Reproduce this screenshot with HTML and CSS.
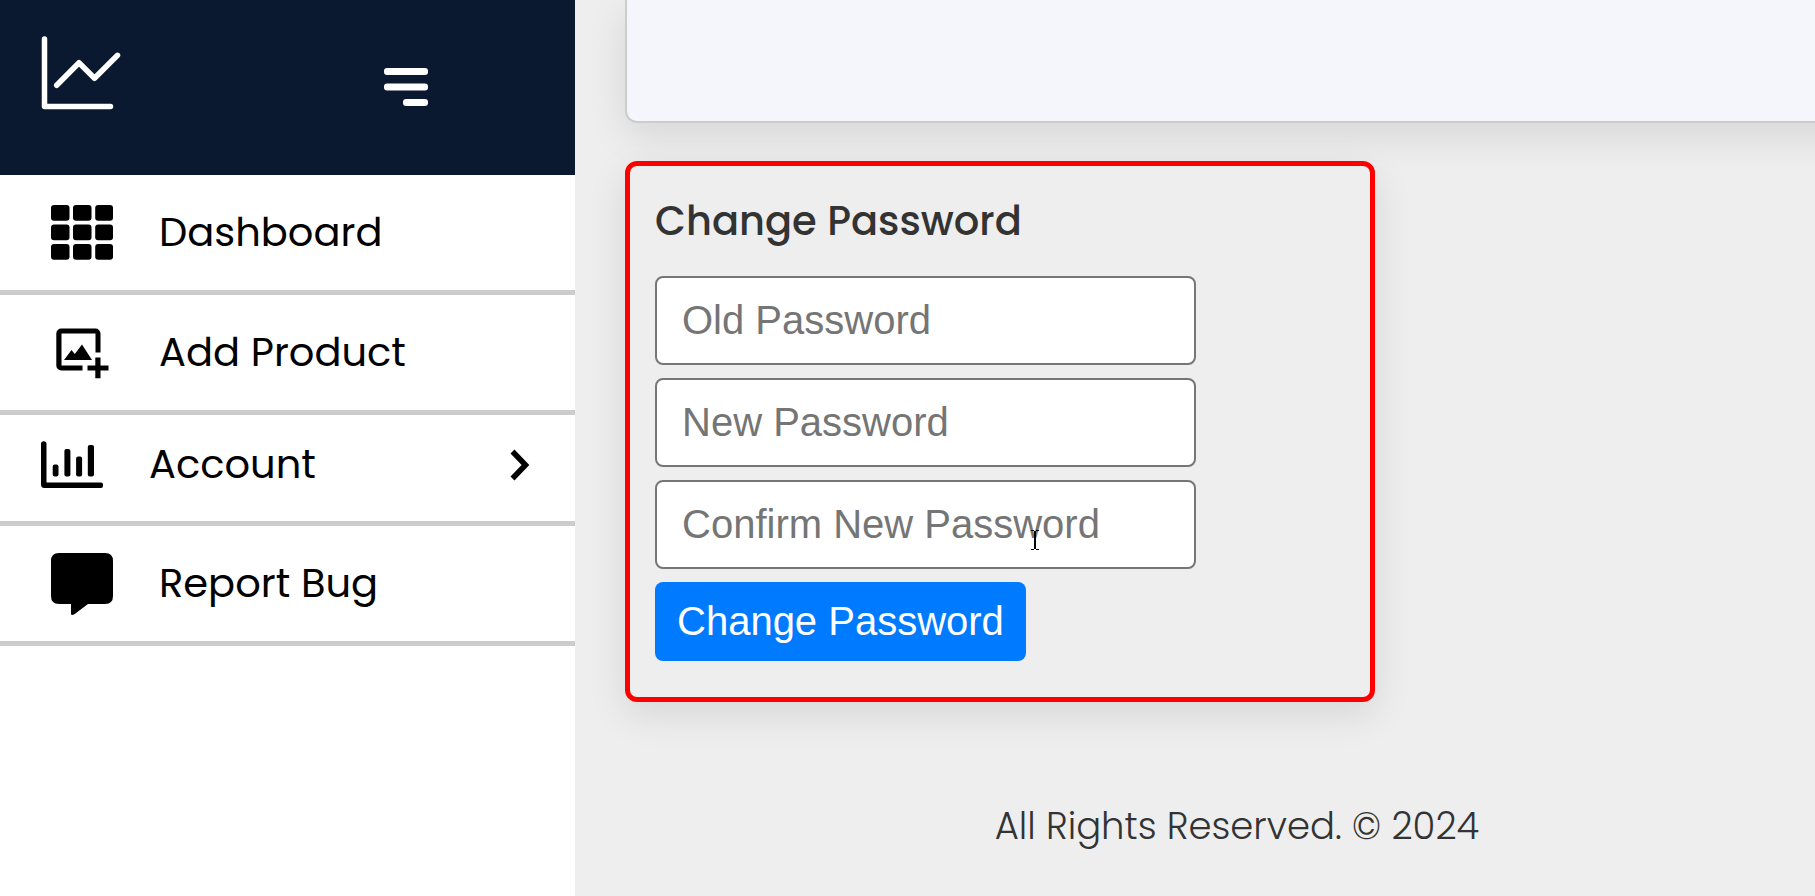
FILE: index.html
```html
<!DOCTYPE html>
<html lang="en">
<head>
<meta charset="utf-8">
<meta name="viewport" content="width=device-width, initial-scale=1">
<title>Change Password</title>
<link rel="stylesheet" href="styles.css">
</head>
<body>
<div class="layout">
  <aside class="sidebar">
    <header class="sidebar-header">
      <svg class="logo" viewBox="0 0 80 74" aria-hidden="true"><path d="M3.500 3V70.500H69.500M15.700 49.300L38 26.700L53.500 42.300L76.500 19.300"/></svg>
      <button class="menu-toggle" type="button" aria-label="Toggle menu">
        <svg class="menu-icon" viewBox="0 0 44 38" aria-hidden="true"><rect width="44" height="7" rx="3"/><rect y="15.500" width="44" height="7" rx="3"/><rect x="19" y="31" width="25" height="7" rx="3"/></svg>
      </button>
    </header>
    <nav>
      <ul class="menu">
        <li class="menu-item">
          <a class="menu-link" href="#">
            <svg class="icon" viewBox="0 -1 62 62" aria-hidden="true"><rect y="3" width="18.500" height="15.700" rx="3"/><rect x="22" y="3" width="18.500" height="15.700" rx="3"/><rect x="44.200" y="3" width="17.800" height="15.700" rx="3"/><rect y="22.500" width="18.500" height="15.700" rx="3"/><rect x="22" y="22.500" width="18.500" height="15.700" rx="3"/><rect x="44.200" y="22.500" width="17.800" height="15.700" rx="3"/><rect y="42" width="18.500" height="15.700" rx="3"/><rect x="22" y="42" width="18.500" height="15.700" rx="3"/><rect x="44.200" y="42" width="17.800" height="15.700" rx="3"/></svg>
            <span>Dashboard</span>
          </a>
        </li>
        <li class="menu-item">
          <a class="menu-link" href="#">
            <svg class="icon" viewBox="0 -1 62 62" aria-hidden="true"><path d="M10.300 6.500H44.300A5 5 0 0 1 49.500 11.500V30.500H44.500V11.500H10.500V43.500H31.500V48.500H10.300A5 5 0 0 1 5.300 43.500V11.500A5 5 0 0 1 10.300 6.500Z"/><path d="M13 38L20.500 28L23.800 32L31 22.500L41 38Z"/><path d="M44.300 35.500H49.500V43.500H57.500V48.500H49.500V56.300H44.300V48.500H36.500V43.500H44.300Z"/></svg>
            <span>Add Product</span>
          </a>
        </li>
        <li class="menu-item">
          <button class="menu-link menu-parent" type="button">
            <svg class="icon" viewBox="0 -1 62 62" aria-hidden="true"><path d="M0 10A2.750 2.750 0 0 1 5.500 10V48.500H60A2 2 0 0 1 62 50.500V52Q62 54 60 54H3.500Q0 54 0 50.500Z"/><rect x="11.700" y="30.500" width="5.800" height="12" rx="2"/><rect x="23.400" y="15" width="6" height="27.500" rx="2"/><rect x="35.100" y="22.500" width="6" height="20" rx="2"/><rect x="46.800" y="11" width="6.200" height="31.500" rx="2"/></svg>
            <span>Account</span>
            <svg class="chevron" viewBox="0 -1 20 32" aria-hidden="true"><path d="M2.500 2.500L15.500 16L2.500 29.500"/></svg>
          </button>
        </li>
        <li class="menu-item">
          <a class="menu-link" href="#">
            <svg class="icon" viewBox="0 -1 62 62" aria-hidden="true"><path d="M8 0H54Q62 0 62 8V43Q62 51 54 51H37L23 61.500Q20 62.500 20 61V51H8Q0 51 0 43V8Q0 0 8 0Z"/></svg>
            <span>Report Bug</span>
          </a>
        </li>
      </ul>
    </nav>
  </aside>
  <main class="content">
    <section class="panel"></section>
    <form class="card">
      <h2 class="card-title">Change Password</h2>
      <div class="fields">
        <input class="field" type="password" placeholder="Old Password" aria-label="Old Password">
        <input class="field" type="password" placeholder="New Password" aria-label="New Password">
        <div class="field-wrap">
          <input class="field" type="password" placeholder="Confirm New Password" aria-label="Confirm New Password">
          <svg class="text-cursor" viewBox="0 0 8 20" aria-hidden="true"><path d="M0 .5H3M5 .5H8M0 19.500H3M5 19.500H8"/><path class="stem" d="M4 1V19"/></svg>
        </div>
        <button class="submit" type="button">Change Password</button>
      </div>
    </form>
    <footer class="footer">All Rights Reserved. © 2024</footer>
  </main>
</div>
</body>
</html>
```
FILE: styles.css
```css
* {
  box-sizing: border-box;
}

body {
  margin: 0;
  background: #eee;
  color: #333;
  font-family: Poppins, Inter, "Liberation Sans", sans-serif;
  font-size: 40px;
}

.layout {
  display: flex;
  min-height: 100vh;
}

.sidebar {
  flex: 0 0 575px;
  background: #fff;
}

.sidebar-header {
  display: flex;
  justify-content: space-between;
  align-items: flex-start;
  height: 175px;
  padding: 36px 147px 0 41px;
  background: #0a192f;
}

.logo {
  width: 80px;
  height: 74px;
  fill: none;
  stroke: #fff;
  stroke-width: 5.5;
  stroke-linecap: round;
  stroke-linejoin: round;
}

.menu-toggle {
  display: flex;
  margin: 32px 0 0;
  padding: 0;
  border: 0;
  background: none;
}

.menu-icon {
  width: 44px;
  height: 38px;
  fill: #fff;
}

.menu {
  margin: 0;
  padding: 0;
  list-style: none;
}

.menu-item {
  border-bottom: 5px solid #ccc;
}

.menu-link {
  display: flex;
  align-items: center;
  gap: 46px;
  width: 100%;
  height: 115px;
  padding: 0 45px 2px 51px;
  border: 0;
  background: none;
  color: #000;
  font: inherit;
  text-align: left;
  text-decoration: none;
}

.menu-parent {
  height: 106px;
  padding-bottom: 8px;
  padding-left: 41px;
}

.icon {
  flex: none;
  width: 62px;
  height: 62px;
  overflow: visible;
}

.chevron {
  width: 20px;
  height: 32px;
  margin-left: auto;
  fill: none;
  stroke: #000;
  stroke-width: 5.5;
  overflow: visible;
}

.content {
  flex: 1;
  min-width: 0;
  padding-left: 50px;
  overflow: hidden;
}

.panel {
  height: 123px;
  margin-right: -40px;
  border: 2px solid #ccc;
  border-width: 0 0 2px 2px;
  border-radius: 0 0 0 12px;
  background: #f4f6fb;
  box-shadow: 0 12px 38px rgba(0, 0, 0, 0.1);
}

.card {
  max-width: 750px;
  margin-top: 38px;
  padding: 25px 25px 36px;
  border: 5px solid #f00;
  border-radius: 12px;
  background: #eee;
  box-shadow: 0 12px 38px rgba(0, 0, 0, 0.1);
}

.card-title {
  margin: 0 0 25px;
  font-size: 40px;
  font-weight: 500;
  line-height: 60px;
}

.fields {
  display: flex;
  flex-direction: column;
  align-items: flex-start;
  gap: 13px;
  max-width: 541px;
}

.field-wrap {
  position: relative;
  display: flex;
  width: 100%;
}

.field {
  width: 100%;
  height: 89px;
  padding: 0 25px;
  border: 2px solid #767676;
  border-radius: 8px;
  background: #fff;
  font-family: "Liberation Sans", Arial, sans-serif;
  font-size: 40px;
}

.field::placeholder {
  color: #757575;
  opacity: 1;
}

.text-cursor {
  position: absolute;
  top: 50px;
  left: 376px;
  width: 8px;
  height: 20px;
  fill: none;
  stroke: #000;
}

.stem {
  stroke-width: 2;
}

.submit {
  height: 79px;
  padding: 0 22px;
  border: 0;
  border-radius: 8px;
  background: #007bff;
  color: #fff;
  font-family: "Liberation Sans", Arial, sans-serif;
  font-size: 40px;
}

.footer {
  padding: 94px 0 38px 34px;
  font-size: 37px;
  font-weight: 300;
  line-height: 60px;
  text-align: center;
}
```
